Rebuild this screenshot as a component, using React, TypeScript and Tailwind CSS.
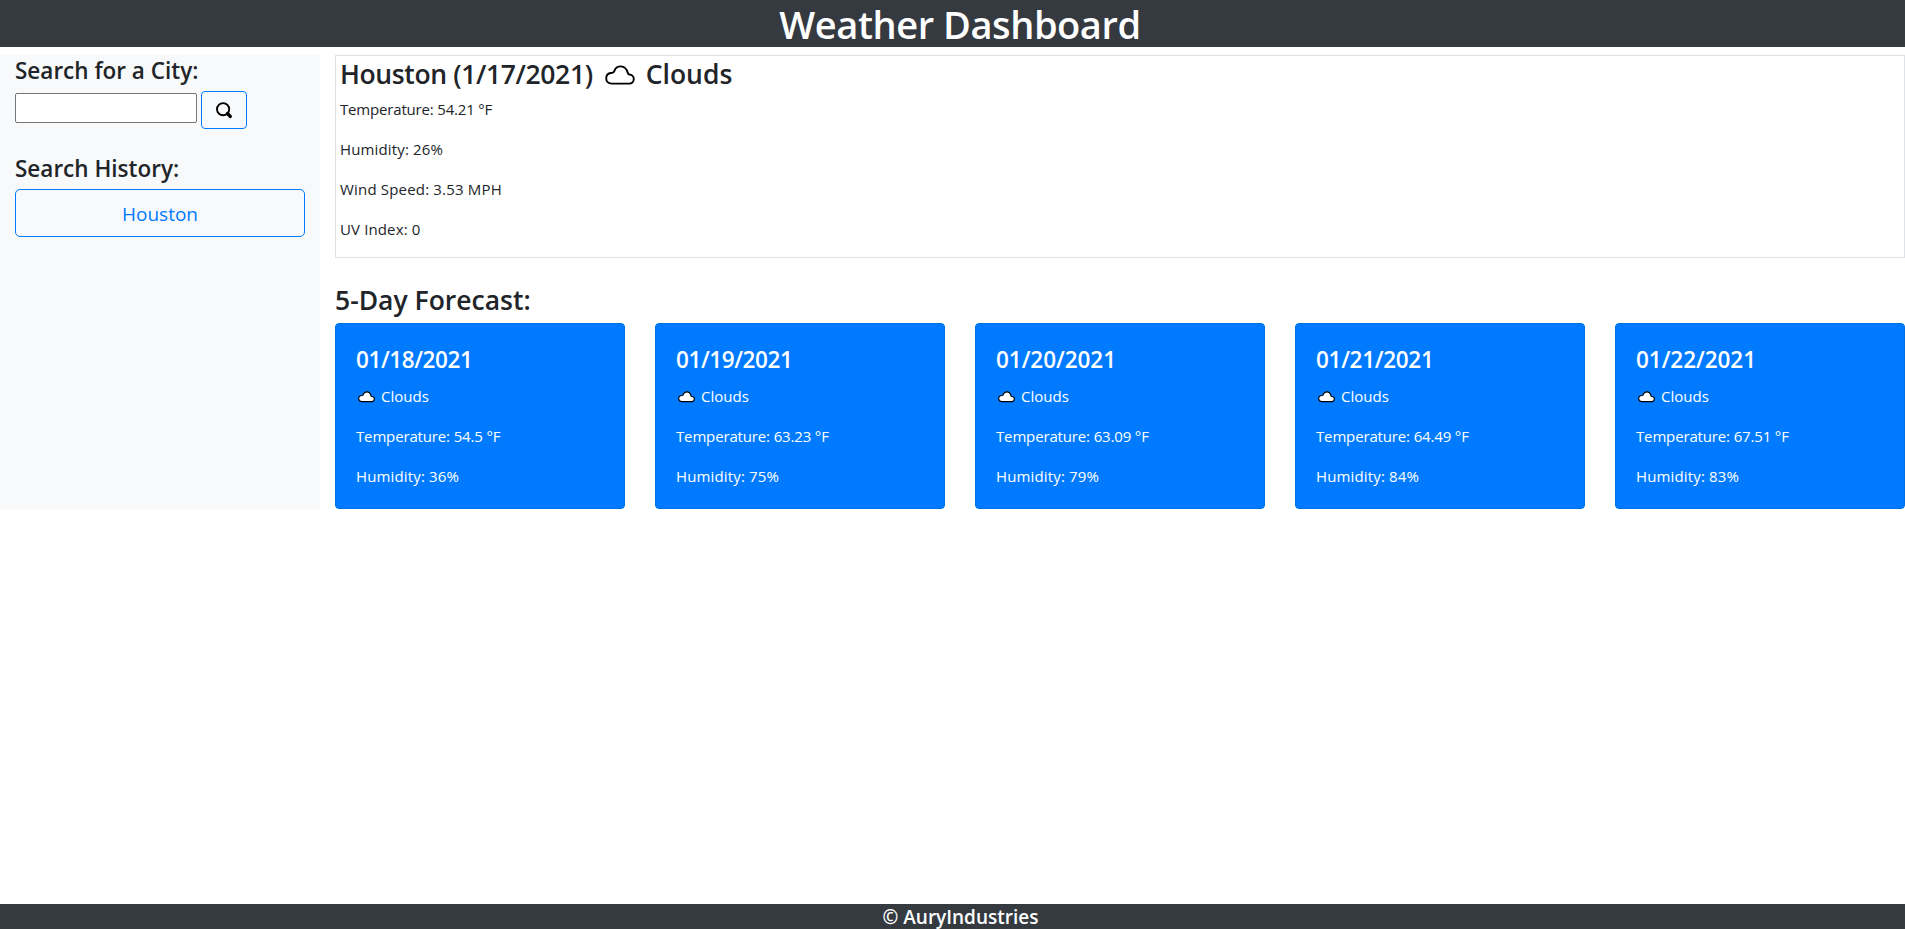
import React from "react";

type Day = { date: string; temperature: string; humidity: string; tracking: string };

const forecast: Day[] = [
  { date: "01/18/2021", temperature: "54.5", humidity: "36", tracking: "tracking-[-0.4px]" },
  { date: "01/19/2021", temperature: "63.23", humidity: "75", tracking: "tracking-[-0.4px]" },
  { date: "01/20/2021", temperature: "63.09", humidity: "79", tracking: "tracking-[-0.05px]" },
  { date: "01/21/2021", temperature: "64.49", humidity: "84", tracking: "tracking-[-0.3px]" },
  { date: "01/22/2021", temperature: "67.51", humidity: "83", tracking: "tracking-[-0.05px]" },
];

function Cloud({ className, stroke }: { className: string; stroke: number }) {
  return (
    <svg viewBox="0 0 30 20" className={className} aria-hidden="true">
      <path
        d="M6.5 18.6H24.3C27 18.6 28.8 16.6 28.8 14.1C28.8 11.6 26.9 9.6 24.2 9.5C23.6 9.5 23.2 9 22.9 8.2C21.8 4 19.4 1.4 15.8 1.4C12.4 1.4 10.2 3.3 9.3 6.1C9 7.2 8.4 7.7 7.2 7.8C3.7 8 1.2 10.1 1.2 13.3C1.2 16.5 3.4 18.6 6.5 18.6Z"
        fill="#fff"
        stroke="#000"
        strokeWidth={stroke}
      />
    </svg>
  );
}

function SearchIcon() {
  return (
    <svg viewBox="0 0 16 17" className="h-[17px] w-4" fill="none" stroke="#000" aria-hidden="true">
      <circle cx="7.1" cy="7.2" r="6.1" strokeWidth="1.9" />
      <path d="M11.6 11.6L14.2 14.4" strokeWidth="3.4" strokeLinecap="round" />
    </svg>
  );
}

export default function App() {
  return (
    <div className="flex h-[929px] flex-col overflow-hidden bg-white font-['Open_Sans',sans-serif] text-[15px] leading-6 text-[#212529]">
      <header className="h-[47px] bg-[#343a40] pt-0.5 pl-[15px] text-center text-[38px] leading-[45px] font-semibold tracking-[-0.43px] text-white">
        <h1>Weather Dashboard</h1>
      </header>
      <main className="mt-2 flex h-[454px]">
        <aside className="w-80 shrink-0 bg-[#f8f9fa] px-[15px]">
          <h2 className="pt-px text-[22.5px] leading-[29px] font-semibold">Search for a City:</h2>
          <div className="mt-1.5 flex gap-1">
            <input aria-label="City" className="mt-0.5 h-[30px] w-[182px] rounded-[2px] border border-[#767676] bg-white px-1" />
            <button aria-label="Search" className="flex h-[38px] w-[46px] items-center justify-center rounded border border-[#007bff]">
              <SearchIcon />
            </button>
          </div>
          <h2 className="mt-[25px] text-[22.5px] leading-[29px] font-semibold">Search History:</h2>
          <button className="mt-[6px] block h-12 w-full rounded-[5px] border border-[#007bff] pt-0.5 text-[19px] text-[#007bff]">
            Houston
          </button>
        </aside>
        <section className="ml-[15px] flex-1">
          <div className="h-[203px] border border-[#dee2e6] pl-1">
            <h2 className="mt-px mb-1.5 flex h-[34px] items-center text-[26.5px] font-semibold">
              <span className="tracking-[-0.37px]">Houston (1/17/2021)</span>
              <Cloud className="mt-0.5 mr-[11px] ml-3 h-5 w-[30px]" stroke={1.9} />
              <span>Clouds</span>
            </h2>
            <div className="flex flex-col gap-4">
              <p className="tracking-[-0.18px]">Temperature: 54.21 °F</p>
              <p className="tracking-[0.15px]">Humidity: 26%</p>
              <p className="tracking-[0.18px]">Wind Speed: 3.53 MPH</p>
              <p className="tracking-[0.13px]">UV Index: 0</p>
            </div>
          </div>
          <h2 className="mt-6 mb-2 h-[33px] text-[26.5px] leading-[37px] font-semibold">5-Day Forecast:</h2>
          <div className="grid grid-cols-5 gap-[30px]">
            {forecast.map((day) => (
              <article key={day.date} className="h-[186px] rounded border border-[#006fe6] bg-[#007bff] px-5 pt-[21px] text-white">
                <h3 className={`mb-2 h-[29px] text-[22.5px] leading-[30px] font-semibold ${day.tracking}`}>{day.date}</h3>
                <div className="flex flex-col gap-4 pt-0.5">
                  <p className="flex items-center">
                    <Cloud className="mt-0.5 mr-1.5 ml-0.5 h-[11.5px] w-[17px]" stroke={2} />
                    Clouds
                  </p>
                  <p className="tracking-[-0.15px]">Temperature: {day.temperature} °F</p>
                  <p className="tracking-[0.15px]">Humidity: {day.humidity}%</p>
                </div>
              </article>
            ))}
          </div>
        </section>
      </main>
      <footer className="mt-auto h-[25px] bg-[#343a40] pl-4 text-center text-[19px] leading-[27px] font-semibold text-white">
        © AuryIndustries
      </footer>
    </div>
  );
}
